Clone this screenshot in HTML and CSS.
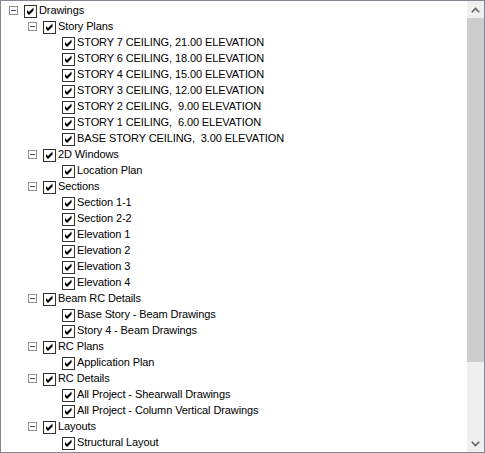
FILE: index.html
```html
<!DOCTYPE html>
<html>
<head>
<meta charset="utf-8">
<link rel="stylesheet" href="styles.css">
</head>
<body>
<div class="tree">
  <div class="content">
    <ul class="level">
      <li>
        <div class="node"><span class="exp"></span><span class="cb"></span><span class="label">Drawings</span></div>
        <ul class="level sub">
          <li>
            <div class="node"><span class="exp"></span><span class="cb"></span><span class="label">Story Plans</span></div>
            <ul class="level sub">
              <li><div class="node"><span class="gap"></span><span class="cb"></span><span class="label">STORY 7 CEILING, 21.00 ELEVATION</span></div></li>
              <li><div class="node"><span class="gap"></span><span class="cb"></span><span class="label">STORY 6 CEILING, 18.00 ELEVATION</span></div></li>
              <li><div class="node"><span class="gap"></span><span class="cb"></span><span class="label">STORY 4 CEILING, 15.00 ELEVATION</span></div></li>
              <li><div class="node"><span class="gap"></span><span class="cb"></span><span class="label">STORY 3 CEILING, 12.00 ELEVATION</span></div></li>
              <li><div class="node"><span class="gap"></span><span class="cb"></span><span class="label">STORY 2 CEILING,  9.00 ELEVATION</span></div></li>
              <li><div class="node"><span class="gap"></span><span class="cb"></span><span class="label">STORY 1 CEILING,  6.00 ELEVATION</span></div></li>
              <li><div class="node"><span class="gap"></span><span class="cb"></span><span class="label">BASE STORY CEILING,  3.00 ELEVATION</span></div></li>
            </ul>
          </li>
          <li>
            <div class="node"><span class="exp"></span><span class="cb"></span><span class="label">2D Windows</span></div>
            <ul class="level sub">
              <li><div class="node"><span class="gap"></span><span class="cb"></span><span class="label">Location Plan</span></div></li>
            </ul>
          </li>
          <li>
            <div class="node"><span class="exp"></span><span class="cb"></span><span class="label">Sections</span></div>
            <ul class="level sub">
              <li><div class="node"><span class="gap"></span><span class="cb"></span><span class="label">Section 1-1</span></div></li>
              <li><div class="node"><span class="gap"></span><span class="cb"></span><span class="label">Section 2-2</span></div></li>
              <li><div class="node"><span class="gap"></span><span class="cb"></span><span class="label">Elevation 1</span></div></li>
              <li><div class="node"><span class="gap"></span><span class="cb"></span><span class="label">Elevation 2</span></div></li>
              <li><div class="node"><span class="gap"></span><span class="cb"></span><span class="label">Elevation 3</span></div></li>
              <li><div class="node"><span class="gap"></span><span class="cb"></span><span class="label">Elevation 4</span></div></li>
            </ul>
          </li>
          <li>
            <div class="node"><span class="exp"></span><span class="cb"></span><span class="label">Beam RC Details</span></div>
            <ul class="level sub">
              <li><div class="node"><span class="gap"></span><span class="cb"></span><span class="label">Base Story - Beam Drawings</span></div></li>
              <li><div class="node"><span class="gap"></span><span class="cb"></span><span class="label">Story 4 - Beam Drawings</span></div></li>
            </ul>
          </li>
          <li>
            <div class="node"><span class="exp"></span><span class="cb"></span><span class="label">RC Plans</span></div>
            <ul class="level sub">
              <li><div class="node"><span class="gap"></span><span class="cb"></span><span class="label">Application Plan</span></div></li>
            </ul>
          </li>
          <li>
            <div class="node"><span class="exp"></span><span class="cb"></span><span class="label">RC Details</span></div>
            <ul class="level sub">
              <li><div class="node"><span class="gap"></span><span class="cb"></span><span class="label">All Project - Shearwall Drawings</span></div></li>
              <li><div class="node"><span class="gap"></span><span class="cb"></span><span class="label">All Project - Column Vertical Drawings</span></div></li>
            </ul>
          </li>
          <li>
            <div class="node"><span class="exp"></span><span class="cb"></span><span class="label">Layouts</span></div>
            <ul class="level sub">
              <li><div class="node"><span class="gap"></span><span class="cb"></span><span class="label">Structural Layout</span></div></li>
            </ul>
          </li>
        </ul>
      </li>
    </ul>
  </div>
  <div class="scrollbar">
    <div class="arrow">
      <svg width="9" height="6" viewBox="0 0 9 6"><polyline points="0.8,5.2 4.5,1.5 8.2,5.2" fill="none" stroke="#606060" stroke-width="1.6"/></svg>
    </div>
    <div class="thumb"></div>
    <div class="track"></div>
    <div class="arrow">
      <svg width="9" height="6" viewBox="0 0 9 6"><polyline points="0.8,0.8 4.5,4.5 8.2,0.8" fill="none" stroke="#606060" stroke-width="1.6"/></svg>
    </div>
  </div>
</div>
</body>
</html>
```
FILE: styles.css
```css
html, body {
  margin: 0;
  padding: 0;
  background: #ffffff;
}

.tree {
  width: 485px;
  height: 453px;
  box-sizing: border-box;
  border: 1px solid #828790;
  display: flex;
  background: #ffffff;
  overflow: hidden;
}

.content {
  flex: 1;
  padding: 1px 0 0 8px;
  overflow: hidden;
  font-family: "Liberation Sans", Arial, sans-serif;
  font-size: 11px;
  letter-spacing: -0.1px;
  color: #000000;
}

.level {
  list-style: none;
  margin: 0;
  padding: 0;
}

.sub {
  padding-left: 19px;
}

.node {
  height: 16px;
  display: flex;
  align-items: flex-start;
}

.exp {
  width: 9px;
  height: 9px;
  margin: 4px 6px 0 0;
  flex: none;
  background: url("data:image/svg+xml,%3Csvg xmlns='http://www.w3.org/2000/svg' width='9' height='9'%3E%3Crect x='0.5' y='0.5' width='8' height='8' fill='%23ffffff' stroke='%23919191'/%3E%3Cline x1='2' y1='4.5' x2='7' y2='4.5' stroke='%233b4f7c'/%3E%3C/svg%3E") no-repeat;
}

.gap {
  width: 15px;
  flex: none;
}

.cb {
  width: 13px;
  height: 13px;
  margin-top: 3px;
  flex: none;
  background: url("data:image/svg+xml,%3Csvg xmlns='http://www.w3.org/2000/svg' width='13' height='13'%3E%3Crect x='0.5' y='0.5' width='12' height='12' fill='%23ffffff' stroke='%23333333'/%3E%3Cpath d='M3 5 L5 7 L9.5 2.5 L9.5 5.5 L5 10 L3 8 Z' fill='%23000000'/%3E%3C/svg%3E") no-repeat;
}

.label {
  margin-left: 2px;
  line-height: 16px;
  white-space: pre;
}

.scrollbar {
  width: 17px;
  flex: none;
  display: flex;
  flex-direction: column;
  background: #f0f0f0;
}

.arrow {
  height: 17px;
  flex: none;
  display: flex;
  align-items: center;
  justify-content: center;
}

.thumb {
  height: 344px;
  flex: none;
  background: #cdcdcd;
}

.track {
  flex: 1;
}
```
